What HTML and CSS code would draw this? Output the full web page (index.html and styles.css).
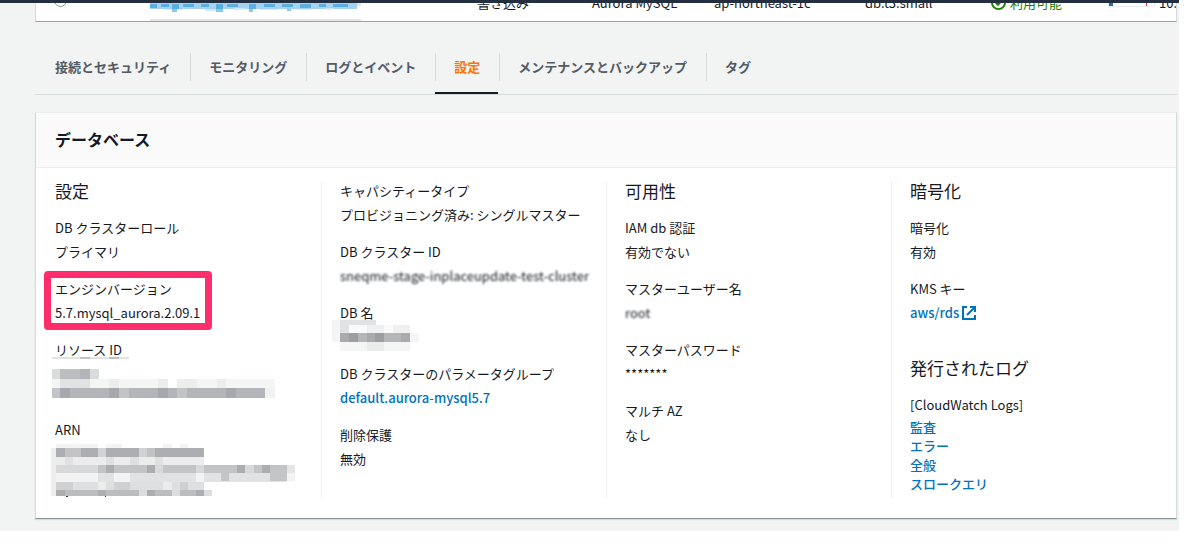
FILE: index.html
```
<!DOCTYPE html>
<html lang="ja">
<head>
<meta charset="utf-8">
<title>データベース</title>
<link rel="stylesheet" href="styles.css">
</head>
<body>
<div class="app">
  <div class="topbar"></div>
  <main class="main">
    <section class="instances">
      <div class="instance-row">
        <span class="cell-select"><input type="radio" class="radio" name="instance" aria-label="インスタンスを選択"></span>
        <span class="cell-name">
          <svg class="name-mask" viewBox="0 0 633 54" shape-rendering="crispEdges" aria-hidden="true">
            <path fill="#e3e5e6" d="M600 0h33v8H600zM0 49h633v4H0z"/>
            <path fill="#a5d2ee" d="M0 0h622v17H0z"/>
            <path fill="#5aaee0" d="M0 3h22v11H0zM33 3h24v9H33zM66 3h22v14H66zM99 3h33v9H99zM154 3h22v9H154zM198 3h22v14H198zM231 3h33v9H231zM297 3h22v14H297zM341 3h33v9H341zM396 3h33v9H396zM451 3h33v11H451zM506 3h22v9H506zM550 3h44v9H550z"/>
            <path fill="#d3e9f7" d="M44 17h55v5H44zM165 17h44v7H165zM253 14h33v8H253zM330 17h55v5H330zM440 17h44v5H440zM528 14h22v6H528z"/>
            <path fill="#8cc6ea" d="M66 17h16v9H66zM198 17h20v9H198zM297 17h12v9H297zM412 17h12v7H412z"/>
          </svg>
        </span>
        <span class="cell-role">書き込み</span>
        <span class="cell-engine">Aurora MySQL</span>
        <span class="cell-zone">ap-northeast-1c</span>
        <span class="cell-size">db.t3.small</span>
        <span class="cell-status">
          <svg class="status-icon" viewBox="0 0 16 16" fill="none" stroke="currentColor" stroke-width="2" aria-hidden="true"><circle cx="8" cy="8" r="7"/><path d="M4.5 7.5l3 3 4.5-5"/></svg>
          利用可能
        </span>
        <span class="cell-cpu"><span class="meter"></span>10.</span>
      </div>
    </section>

    <nav class="tabs">
      <a class="tab" href="#connectivity">接続とセキュリティ</a>
      <a class="tab" href="#monitoring">モニタリング</a>
      <a class="tab" href="#logs">ログとイベント</a>
      <a class="tab tab-active" href="#configuration" aria-current="page">設定</a>
      <a class="tab" href="#maintenance">メンテナンスとバックアップ</a>
      <a class="tab" href="#tags">タグ</a>
    </nav>

    <section class="panel">
      <h2 class="panel-title">データベース</h2>
      <div class="columns">
        <div class="column">
          <h3 class="heading">設定</h3>
          <dl class="pair"><dt>DB クラスターロール</dt><dd>プライマリ</dd></dl>
          <dl class="pair pair-marked"><dt>エンジンバージョン</dt><dd>5.7.mysql_aurora.2.09.1</dd></dl>
          <dl class="pair">
            <dt>リソース ID</dt>
            <dd class="masked two-lines">
              <svg class="mosaic mosaic-resource" viewBox="66 77 672 126" shape-rendering="crispEdges" aria-hidden="true">
                <path fill="#e2e3e5" d="M66 77h230v6H66z"/><path fill="#bfc0c3" d="M150 77h29v6h-29zM237 77h30v6h-30z"/>
                <path fill="#dadbdd" d="M66 113h142v30H66z"/><path fill="#bcbdc0" d="M90 113h90v30H90z"/><path fill="#b3b4b7" d="M150 113h29v30h-29z"/>
                <path fill="#f4f5f5" d="M66 143h669v29H66z"/><path fill="#e1e2e4" d="M90 143h90v29H90z"/><path fill="#ededee" d="M237 143h30v29h-30zM384 143h29v29h-29zM442 143h59v29h-59zM560 143h29v29h-29z"/><path fill="#fff" d="M413 143h29v29h-29z"/>
                <path fill="#b4b5b8" d="M90 171h616v30H90z"/><path fill="#c3c4c6" d="M66 171h24v30H66zM267 171h29v30h-29zM442 171h29v30h-29z"/><path fill="#a7a8ad" d="M90 171h30v30H90zM237 171h30v30h-30zM384 171h29v30h-29zM589 171h30v30h-30z"/><path fill="#f0f2f2" d="M706 171h29v30h-29z"/>
              </svg>
            </dd>
          </dl>
          <dl class="pair">
            <dt>ARN</dt>
            <dd class="masked three-lines">
              <svg class="mosaic mosaic-arn" viewBox="64 342 732 159" shape-rendering="crispEdges" aria-hidden="true">
                <path fill="#f3f3f4" d="M80 342h125v12H80zM228 342h49v12h-49zM401 342h25v12h-25zM450 342h25v12h-25z"/>
                <path fill="#eeeeef" d="M64 354h16v144H64z"/>
                <path fill="#c3c3c5" d="M80 354h444v26H80z"/><path fill="#adaeb1" d="M80 354h25v26H80zM154 354h50v26h-50zM228 354h99v26h-99zM376 354h148v26H376z"/><path fill="#d1d2d4" d="M204 354h24v26h-24zM327 354h24v26h-24z"/>
                <path fill="#ececed" d="M80 380h444v25H80z"/><path fill="#dfe0e1" d="M105 380h25v25h-25zM228 380h25v25h-25zM302 380h25v25h-25zM376 380h25v25h-25z"/>
                <path fill="#c3c4c6" d="M204 405h567v25H204z"/><path fill="#d8d9da" d="M80 405h124v25H80zM376 405h25v25h-25zM500 405h24v25h-24zM647 405h25v25h-25z"/><path fill="#abadb0" d="M228 405h25v25h-25zM352 405h24v25h-24zM622 405h25v25h-25zM697 405h25v25h-25z"/><path fill="#e5e5e6" d="M771 405h24v25h-24z"/>
                <path fill="#e1e2e3" d="M204 430h567v26H204z"/><path fill="#f3f3f4" d="M80 430h124v26H80zM253 430h49v26h-49zM500 430h24v26h-24zM771 430h24v24h-24z"/><path fill="#c4c5c7" d="M573 430h25v24h-25zM722 430h24v24h-24zM746 430h25v24h-25z"/>
                <path fill="#dedfe0" d="M80 456h444v23H80z"/><path fill="#cfd0d2" d="M80 456h50v23H80zM253 456h49v23h-49zM450 456h25v23h-25z"/><path fill="#ececed" d="M204 456h24v23h-24zM401 456h25v23h-25z"/>
                <path fill="#bcbdbf" d="M80 479h444v19H80z"/><path fill="#adaeb1" d="M80 479h25v19H80zM204 479h24v19h-24zM352 479h24v19h-24zM500 479h24v19h-24z"/><path fill="#dcddde" d="M327 479h25v19h-25zM426 479h24v19h-24zM524 479h24v19h-24z"/>
                <path fill="#33363b" d="M109 498h5v3h-5zM225 498h5v3h-5z"/>
              </svg>
            </dd>
          </dl>
        </div>

        <div class="column">
          <dl class="pair"><dt>キャパシティータイプ</dt><dd>プロビジョニング済み: シングルマスター</dd></dl>
          <dl class="pair"><dt>DB クラスター ID</dt><dd class="blurred">sneqme-stage-inplaceupdate-test-cluster</dd></dl>
          <dl class="pair">
            <dt>DB 名</dt>
            <dd class="masked">
              <svg class="mosaic mosaic-name" viewBox="36 441 261 99" shape-rendering="crispEdges" aria-hidden="true">
                <path fill="#e1e2e3" d="M61 447h106v14H61z"/><path fill="#f4f4f5" d="M36 447h25v67H36z"/>
                <path fill="#f0f0f1" d="M61 462h210v25H61z"/><path fill="#e0e1e2" d="M61 462h25v25H61z"/><path fill="#fafafa" d="M86 462h56v25H86zM192 462h26v25h-26z"/>
                <path fill="#a9aaad" d="M61 487h210v27H61z"/><path fill="#9d9ea2" d="M86 487h27v27H86zM165 487h27v27h-27z"/><path fill="#b5b6b8" d="M113 487h27v27h-27zM192 487h50v27h-50z"/><path fill="#f5f5f6" d="M271 487h26v27h-26z"/>
                <path fill="#f4f6f6" d="M61 514h210v26H61z"/><path fill="#eaecec" d="M140 514h52v26h-52z"/>
              </svg>
            </dd>
          </dl>
          <dl class="pair"><dt>DB クラスターのパラメータグループ</dt><dd><a class="link" href="#parameter-group">default.aurora-mysql5.7</a></dd></dl>
          <dl class="pair"><dt>削除保護</dt><dd>無効</dd></dl>
        </div>

        <div class="column">
          <h3 class="heading">可用性</h3>
          <dl class="pair"><dt>IAM db 認証</dt><dd>有効でない</dd></dl>
          <dl class="pair"><dt>マスターユーザー名</dt><dd class="blurred">root</dd></dl>
          <dl class="pair"><dt>マスターパスワード</dt><dd>*******</dd></dl>
          <dl class="pair"><dt>マルチ AZ</dt><dd>なし</dd></dl>
        </div>

        <div class="column">
          <h3 class="heading">暗号化</h3>
          <dl class="pair"><dt>暗号化</dt><dd>有効</dd></dl>
          <dl class="pair"><dt>KMS キー</dt><dd><a class="link" href="#kms">aws/rds
            <svg class="external" viewBox="0 0 14 14" fill="none" stroke="currentColor" stroke-width="2" aria-hidden="true"><path d="M5 1H1v12h12V9M8 1h5v5M13 1L5 9"/></svg></a></dd></dl>
          <h3 class="heading heading-later">発行されたログ</h3>
          <dl class="pair pair-logs"><dt>[CloudWatch Logs]</dt>
            <dd><a class="link" href="#audit">監査</a></dd>
            <dd><a class="link" href="#error">エラー</a></dd>
            <dd><a class="link" href="#general">全般</a></dd>
            <dd><a class="link" href="#slowquery">スロークエリ</a></dd>
          </dl>
        </div>
      </div>
    </section>
  </main>
</div>
</body>
</html>
```
FILE: styles.css
```
* { box-sizing: border-box; }
body {
  margin: 0;
  background: #fff;
  color: #16191f;
  font: 13px/19px "Noto Sans CJK JP", sans-serif;
}
.app { margin-right: 21px; background: #f2f3f3; }
.topbar { height: 3px; background: #232f3e; }
.main { padding: 0 2px 12px 35px; }

.instances {
  display: flex;
  align-items: flex-end;
  height: 19px;
  overflow: hidden;
  background: #fff;
  border: solid #d5dbdb;
  border-width: 0 1px;
  border-bottom: 1px solid #95a5a6;
}
.instance-row {
  display: grid;
  grid-template-columns: 114px 327px 115px 122px 151px 126px 117px 1fr;
  width: 100%;
  flex: none;
  padding-bottom: 9px;
  white-space: nowrap;
}
.cell-select { padding-left: 18px; }
.radio {
  appearance: none;
  display: block;
  width: 13px;
  height: 13px;
  margin: 1px 0 0;
  border: 1px solid #879596;
  border-radius: 50%;
  background: #fff;
}
.cell-name { align-self: end; height: 9px; }
.name-mask { display: block; width: 211px; height: 18px; }
.cell-status { display: flex; gap: 4px; color: #1d8102; }
.status-icon { width: 15px; height: 15px; margin-top: 2px; }
.cell-cpu { display: flex; gap: 4px; min-width: 0; }
.meter {
  flex: none;
  width: 47px;
  height: 14px;
  border: 1px solid #eaeded;
  background: linear-gradient(90deg, #2e6d9e 4px, transparent 4px 37px, #f33 37px 38px, transparent 38px);
}

.tabs {
  display: flex;
  padding-top: 31px;
  border-bottom: 1px solid #d5dbdb;
}
.tab {
  position: relative;
  padding: 4px 18px 18px 19px;
  margin-left: 1px;
  color: #545b64;
  font-weight: 700;
  text-decoration: none;
  white-space: nowrap;
}
.tab::before {
  content: "";
  position: absolute;
  top: 0;
  left: 0;
  width: 1px;
  height: 28px;
  background: #d5dbdb;
}
.tab:first-child::before { display: none; }
.tab-active { color: #ff7300; box-shadow: inset 0 -2px #16191f; }

.panel {
  margin-top: 17px;
  background: #fff;
  border: 1px solid #d5dbdb;
  border-top-color: #eaeded;
  border-bottom-color: #879596;
  box-shadow: 0 1px 1px #d5dbdb;
}
.panel-title {
  margin: 0;
  padding: 14px 19px 16px;
  background: #fafafa;
  border-bottom: 1px solid #eaeded;
  font-size: 16px;
  line-height: 24px;
}
.columns {
  display: grid;
  grid-template-columns: repeat(4, 1fr);
  padding: 13px 0 20px;
}
.column { padding-left: 19px; min-width: 0; }
.column + .column { padding-left: 18px; border-left: 1px solid #eff1f1; }
.heading { margin: 0 0 18px; font-size: 17px; font-weight: 400; line-height: 19px; }
.heading-later { margin-top: 36px; }
.pair { position: relative; width: fit-content; margin: 0; }
.pair + .pair { margin-top: 18px; }
.pair dt, .pair dd { margin: 0; white-space: nowrap; }
.pair dt + dd { margin-top: 5px; }
.pair-logs dt + dd { margin-top: 3px; }
.pair-marked::after {
  content: "";
  position: absolute;
  inset: -8px -12px -8px -11px;
  border: 7px solid #ff2d6b;
  border-radius: 4px;
}
.link { color: #0073bb; font-weight: 500; text-decoration: none; }
.external { width: 14px; height: 14px; vertical-align: -2px; }
.blurred { filter: blur(1px); }
.masked { position: relative; height: 19px; }
.two-lines { height: 38px; }
.three-lines { height: 54px; }
.mosaic { position: absolute; display: block; }
.mosaic-resource { top: -7px; left: -3px; width: 224px; height: 42px; }
.mosaic-arn { top: 0; left: -4px; width: 244px; height: 53px; }
.mosaic-name { top: -9px; left: -8px; width: 87px; height: 33px; }
```
